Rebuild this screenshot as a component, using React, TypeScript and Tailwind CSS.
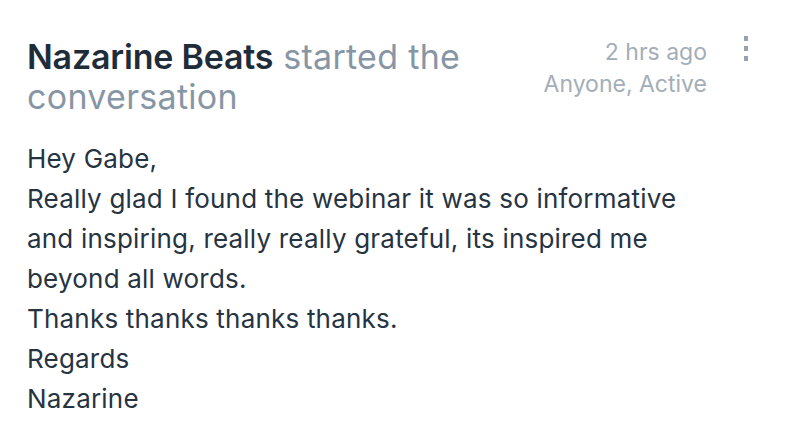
import React from 'react';

const lines = [
  'Hey Gabe,',
  'Really glad I found the webinar it was so informative',
  'and inspiring, really really grateful, its inspired me',
  'beyond all words.',
  'Thanks thanks thanks thanks.',
  'Regards',
  'Nazarine',
];

export default function App() {
  return (
    <div className="w-[790px] h-[434px] bg-white font-['Inter',sans-serif] overflow-hidden">
      <div className="flex pl-[27px] pt-[37px]">
        <h1 className="w-[470px] text-[34px] leading-[40px] tracking-[0.3px]">
          <span className="font-semibold text-[#1f2d3a] tracking-[-0.2px]">Nazarine Beats</span>{' '}
          <span className="font-normal text-[#8796a5]">started the conversation</span>
        </h1>
        <div className="ml-auto flex items-start pr-[42px] -mt-[1px]">
          <div className="flex flex-col items-end text-[23px] leading-[32px] text-[#a3aeb9]">
            <span>2 hrs ago</span>
            <span>Anyone, Active</span>
          </div>
          <div className="ml-[37px] flex flex-col gap-[5px]">
            <span className="block h-[5px] w-[4px] bg-[#95a3b0]" />
            <span className="block h-[5px] w-[4px] bg-[#95a3b0]" />
            <span className="block h-[5px] w-[4px] bg-[#95a3b0]" />
          </div>
        </div>
      </div>
      <div className="pl-[27px] pt-[22px] text-[26px] leading-[40px] tracking-[0.2px] text-[#263442]">
        {lines.map((l, i) => (
          <p key={i}>{l}</p>
        ))}
      </div>
    </div>
  );
}
